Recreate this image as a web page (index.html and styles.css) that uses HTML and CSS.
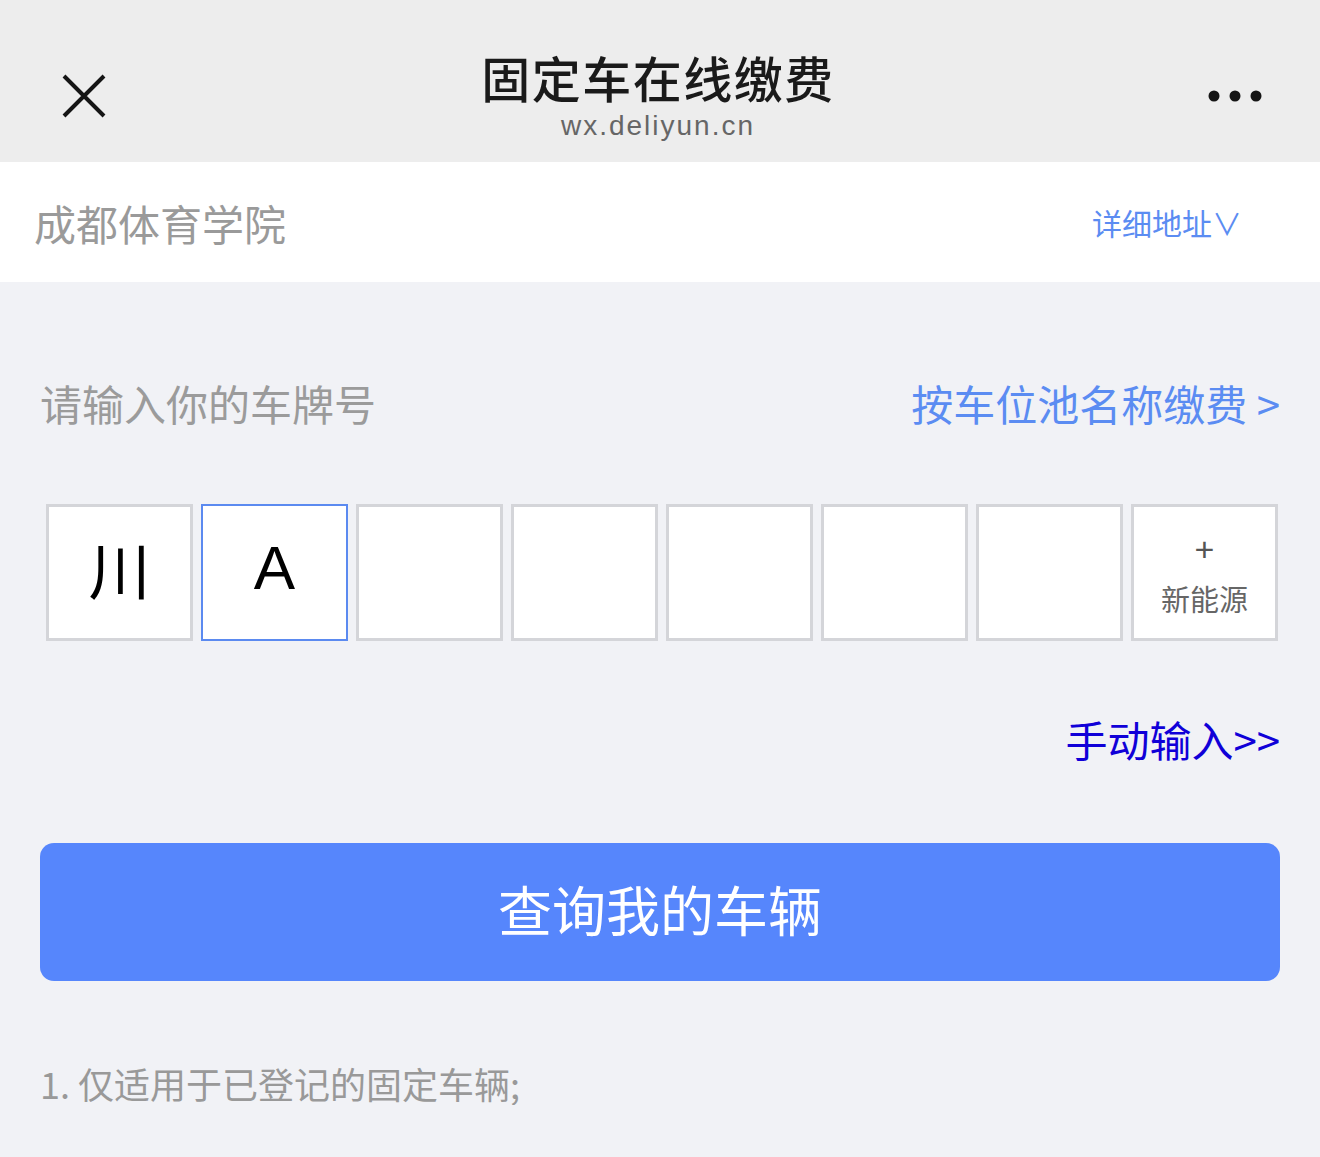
FILE: index.html
```html
<!DOCTYPE html>
<html lang="zh-CN">
<head>
    <meta charset="UTF-8">
    <meta name="viewport" content="width=device-width, initial-scale=1.0">
    <title>固定车在线缴费</title>
    <link rel="stylesheet" href="styles.css">
</head>
<body>
<div class="header">
    <div class="close">
        <svg width="44" height="44" viewBox="0 0 44 44">
            <path d="M2 2 L42 42 M42 2 L2 42" stroke="#151515" stroke-width="4" fill="none"/>
        </svg>
    </div>
    <div class="title">
        <div class="name">固定车在线缴费</div>
        <div class="url">wx.deliyun.cn</div>
    </div>
    <div class="more">
        <svg width="54" height="12" viewBox="0 0 54 12">
            <circle cx="6" cy="6" r="5.5" fill="#151515"/>
            <circle cx="27" cy="6" r="5.5" fill="#151515"/>
            <circle cx="48" cy="6" r="5.5" fill="#151515"/>
        </svg>
    </div>
</div>

<div class="place">
    <span class="place-name">成都体育学院</span>
    <span class="place-addr">详细地址∨</span>
</div>

<div class="main">
    <div class="tip-row">
        <span class="tip">请输入你的车牌号</span>
        <span class="pool">按车位池名称缴费 &gt;</span>
    </div>

    <div class="plates">
        <div class="plate">川</div>
        <div class="plate active">A</div>
        <div class="plate"></div>
        <div class="plate"></div>
        <div class="plate"></div>
        <div class="plate"></div>
        <div class="plate"></div>
        <div class="plate energy">
            <span class="plus">+</span>
            <span class="energy-text">新能源</span>
        </div>
    </div>

    <div class="manual-row">
        <a class="manual">手动输入&gt;&gt;</a>
    </div>

    <button type="button" class="btn-query">查询我的车辆</button>

    <div class="note">1. 仅适用于已登记的固定车辆;</div>
</div>
</body>
</html>
```

FILE: styles.css
```css
body {
    margin: 0;
    background-color: #f1f2f6;
    font-family: "Noto Sans CJK SC", "Liberation Sans", sans-serif;
}

.header {
    height: 162px;
    background-color: #ededed;
    display: flex;
    justify-content: space-between;
    align-items: flex-start;
    padding: 0 58px;
}

.header .close {
    padding-top: 74px;
    padding-left: 4px;
    width: 156px;
}

.header .close svg {
    display: block;
}

.header .title {
    text-align: center;
    padding-top: 44px;
    margin-right: 4px;
}

.header .title .name {
    font-size: 49px;
    line-height: 66px;
    font-weight: 500;
    color: #1a1a1a;
    letter-spacing: 1.5px;
}

.header .title .url {
    font-family: "Liberation Sans", sans-serif;
    font-size: 28px;
    line-height: 32px;
    color: #666;
    letter-spacing: 2px;
}

.header .more {
    width: 160px;
    padding-top: 90px;
    display: flex;
    justify-content: flex-end;
}

.header .more svg {
    display: block;
}

.place {
    height: 120px;
    background-color: #fff;
    display: flex;
    align-items: center;
    justify-content: space-between;
    padding: 0 78px 0 34px;
}

.place .place-name {
    font-size: 42px;
    color: #9a9a9a;
}

.place .place-addr {
    font-size: 30px;
    color: #5b8cf2;
}

.main {
    padding: 0 40px;
}

.tip-row {
    display: flex;
    justify-content: space-between;
    align-items: center;
    padding-top: 96px;
    height: 48px;
    margin-bottom: 78px;
}

.tip-row .tip {
    font-size: 42px;
    color: #9b9b9b;
}

.tip-row .pool {
    font-size: 42px;
    color: #5b8cf2;
}

.plates {
    display: flex;
    gap: 8px;
    padding-left: 6px;
}

.plate {
    box-sizing: border-box;
    flex-shrink: 0;
    width: 147px;
    height: 137px;
    padding-bottom: 10px;
    background-color: #fff;
    border: 3px solid #d4d5d9;
    display: flex;
    align-items: center;
    justify-content: center;
    font-size: 62px;
    color: #000;
    font-family: "Liberation Sans", "Noto Sans CJK SC", sans-serif;
}

.plate.active {
    border: 2px solid #5b8af0;
}

.plate.energy {
    flex-direction: column;
    padding-bottom: 0;
}

.plate .plus {
    font-size: 34px;
    line-height: 34px;
    color: #555;
    margin-top: 4px;
}

.plate .energy-text {
    font-family: "Noto Sans CJK SC", sans-serif;
    font-size: 29px;
    line-height: 40px;
    color: #666;
    margin-top: 12px;
}

.manual-row {
    display: flex;
    justify-content: flex-end;
    margin-top: 73px;
    height: 48px;
    align-items: center;
}

.manual {
    font-size: 42px;
    color: #1000d8;
    cursor: pointer;
}

.btn-query {
    display: block;
    width: 100%;
    height: 138px;
    margin-top: 81px;
    padding-bottom: 8px;
    border: none;
    border-radius: 14px;
    background-color: #5686fc;
    color: #fff;
    font-family: "Noto Sans CJK SC", sans-serif;
    font-size: 54px;
}

.note {
    margin-top: 80px;
    font-size: 36px;
    line-height: 44px;
    color: #999;
}
```
